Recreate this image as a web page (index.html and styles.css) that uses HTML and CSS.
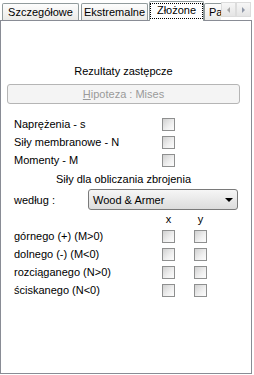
FILE: index.html
```html
<!DOCTYPE html>
<html lang="pl">
<head>
  <meta charset="UTF-8">
  <title>Złożone</title>
  <link rel="stylesheet" href="styles.css">
</head>
<body>
  <div class="tabstrip">
    <div class="tablist">
      <div class="tab t1">Szczegółowe</div>
      <div class="tab t2">Ekstremalne</div>
      <div class="tab active"><span class="focus">Złożone</span></div>
      <div class="tab t4">Pa</div>
    </div>
    <div class="scroller">
      <span class="sbtn"><span class="arr arr-left"></span></span>
      <span class="sbtn"><span class="arr arr-right"></span></span>
    </div>
  </div>
  <div class="panel">
    <div class="title">Rezultaty zastępcze</div>
    <div class="hyp-btn"><span class="ul">H</span>ipoteza : Mises</div>
    <div class="checks">
      <span>Naprężenia - s</span><span class="cb"></span>
      <span>Siły membranowe - N</span><span class="cb"></span>
      <span>Momenty - M</span><span class="cb"></span>
    </div>
    <div class="title sub">Siły dla obliczania zbrojenia</div>
    <div class="method-row">
      <span class="method-label">według :</span>
      <div class="select">
        <span>Wood &amp; Armer</span>
        <span class="caret"></span>
      </div>
    </div>
    <div class="checks two">
      <span></span><span class="axis">x</span><span></span><span class="axis">y</span>
      <span>górnego (+) (M&gt;0)</span><span class="cb"></span><span></span><span class="cb"></span>
      <span>dolnego (-) (M&lt;0)</span><span class="cb"></span><span></span><span class="cb"></span>
      <span>rozciąganego (N&gt;0)</span><span class="cb"></span><span></span><span class="cb"></span>
      <span>ściskanego (N&lt;0)</span><span class="cb"></span><span></span><span class="cb"></span>
    </div>
  </div>
</body>
</html>
```

FILE: styles.css
```css
body {
  margin: 0;
  background: #fff;
  color: #000;
  font-family: "Liberation Sans", Arial, sans-serif;
  font-size: 11px;
  line-height: 14px;
}

/* onglets */
.tabstrip {
  display: flex;
  align-items: flex-end;
  height: 20px;
  width: 254px;
}
.tablist {
  display: flex;
  align-items: flex-end;
  width: 221px;
  height: 21px;
  margin-bottom: -1px;
  overflow: hidden;
  position: relative;
  z-index: 1;
}
.tab {
  box-sizing: border-box;
  height: 17px;
  margin-bottom: 1px;
  border: 1px solid #919b9c;
  border-bottom: none;
  border-radius: 2px 2px 0 0;
  background: linear-gradient(#fdfdfd, #ebebe8);
  display: flex;
  align-items: center;
  justify-content: center;
  flex: none;
  white-space: nowrap;
}
.t1 {
  width: 77px;
  margin-left: 2px;
  margin-right: 2px;
}
.t2 {
  width: 67px;
  margin-right: 1px;
}
.tab.active {
  width: 55px;
  height: 20px;
  margin-bottom: 0;
  background: #fff;
  align-items: flex-start;
}
.focus {
  box-sizing: border-box;
  width: 53px;
  height: 16px;
  margin-top: 1px;
  border: 1px dotted #000;
  text-align: center;
  line-height: 13px;
}
.t4 {
  width: 60px;
  justify-content: flex-start;
  padding-left: 4px;
}
.scroller {
  display: flex;
  align-self: flex-start;
  margin-top: 2px;
}
.sbtn {
  box-sizing: border-box;
  width: 15px;
  height: 15px;
  border: 1px solid #dcdcdc;
  background: linear-gradient(#f7f7f7, #e4e4e4);
  display: flex;
  align-items: center;
  justify-content: center;
}
.arr {
  width: 0;
  height: 0;
  border-top: 3px solid transparent;
  border-bottom: 3px solid transparent;
}
.arr-left {
  border-right: 3px solid #a7a7a7;
}
.arr-right {
  border-left: 3px solid #8f97a8;
}

/* panneau */
.panel {
  box-sizing: border-box;
  width: 252px;
  height: 354px;
  border: 1px solid #898c95;
  background: #fff;
  padding: 0 11px 0 6px;
}
.title {
  text-align: center;
  margin-top: 43px;
}
.title.sub {
  margin-top: 3px;
}
.hyp-btn {
  box-sizing: border-box;
  height: 20px;
  margin-top: 6px;
  border: 1px solid #b5b5b5;
  border-radius: 3px;
  background: #f4f4f4;
  color: #9a9a9a;
  text-align: center;
  line-height: 18px;
}
.ul {
  text-decoration: underline;
}
.checks {
  display: grid;
  grid-template-columns: 148px 13px;
  grid-auto-rows: 18px;
  align-items: center;
  padding-left: 7px;
  margin-top: 11px;
}
.checks.two {
  grid-template-columns: 148px 13px 19px 13px;
  grid-template-rows: 16px;
  margin-top: 1px;
}
.axis {
  text-align: center;
}
.cb {
  box-sizing: border-box;
  width: 13px;
  height: 13px;
  border: 1px solid #8e8f8f;
  background: linear-gradient(135deg, #d0d0d0, #f0f0f0 60%, #fcfcfc);
}
.method-row {
  display: flex;
  align-items: center;
  margin-top: 3px;
  height: 21px;
}
.method-label {
  box-sizing: border-box;
  width: 81px;
  padding-left: 7px;
}
.select {
  box-sizing: border-box;
  width: 150px;
  height: 21px;
  border: 1px solid #7a7a7a;
  border-radius: 3px;
  background: linear-gradient(#f6f6f6, #dcdcdc);
  display: flex;
  align-items: center;
  justify-content: space-between;
  padding: 0 4px 0 4px;
}
.caret {
  width: 0;
  height: 0;
  border-left: 4px solid transparent;
  border-right: 4px solid transparent;
  border-top: 4px solid #000;
}
```
